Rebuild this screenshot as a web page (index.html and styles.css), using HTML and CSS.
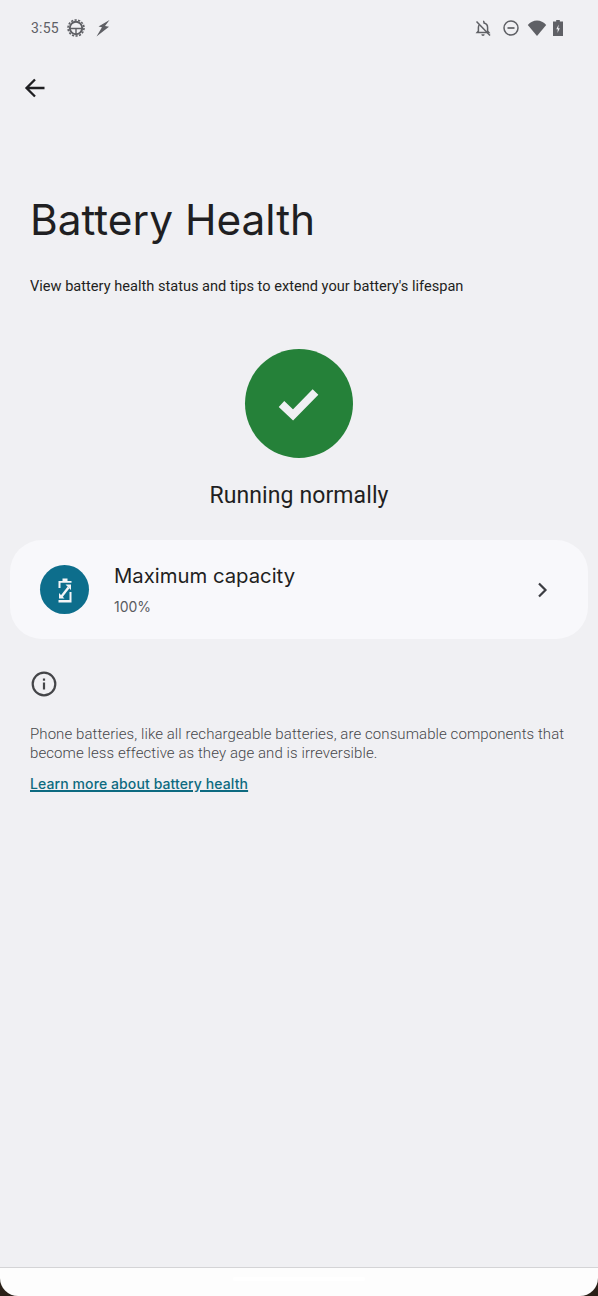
FILE: index.html
```
<!DOCTYPE html>
<html lang="en">
<head>
<meta charset="utf-8">
<title>Battery Health</title>
<link rel="stylesheet" href="styles.css">
</head>
<body>
<div class="screen">
  <header class="status">
    <div class="status-group">
      <span class="clock">3:55</span>
      <svg width="20" height="20" viewBox="0 0 20 20"><circle cx="10" cy="10" r="6.200" fill="none" stroke="#5f6065" stroke-width="2"/><circle cx="10" cy="10" r="8" fill="none" stroke="#5f6065" stroke-width="1.600" stroke-dasharray="2.200 1.400"/><path d="M4 10.500h12M10 10.500v6" stroke="#5f6065" stroke-width="1.400"/></svg>
      <svg class="bolt" width="16" height="20" viewBox="0 0 16 20"><path d="M14.500 2 3.500 8.500l3.500.7L1.500 18.500l12.500-9.700-4-.8z" fill="#5f6065"/></svg>
    </div>
    <div class="status-group right">
      <svg class="bell" width="18" height="18" viewBox="0 0 18 18"><path d="M9 2.200a1 1 0 0 1 1 1v.7c2.200.5 3.600 2.400 3.600 4.600v3.600l1.200 1.400H3.200l1.200-1.400V8.500c0-1 .3-1.900.8-2.600" fill="none" stroke="#5f6065" stroke-width="1.500"/><path d="M7.300 15.200h3.400a1.700 1.700 0 0 1-3.400 0z" fill="#5f6065"/><path d="M2.500 2.500l13.500 14" stroke="#5f6065" stroke-width="1.500"/></svg>
      <svg width="18" height="18" viewBox="0 0 18 18"><circle cx="9" cy="9" r="7" fill="none" stroke="#5f6065" stroke-width="1.500"/><path d="M5.500 9h7" stroke="#5f6065" stroke-width="1.700"/></svg>
      <svg width="20" height="18" viewBox="0 0 20 18"><path d="M.8 6C3.300 3.200 6.500 1.500 10 1.500s6.700 1.700 9.200 4.500L10 17z" fill="#5f6065"/></svg>
      <svg class="battery" width="12" height="18" viewBox="0 0 12 18"><path d="M4.200 1h3.600v1.500H11V17H1V2.500h3.200z" fill="#5f6065"/><path d="M6.700 5.500 4.300 10.200h1.500l-.3 3.800L7.800 9.200H6.200z" fill="#f0f0f3"/></svg>
    </div>
  </header>

  <main class="main">
    <nav class="toolbar">
      <svg width="24" height="24" viewBox="0 0 24 24"><path d="M21.500 12H4.500M12 3.500 3.500 12l8.500 8.500" fill="none" stroke="#1f1f22" stroke-width="2.300"/></svg>
    </nav>

    <h1 class="title">Battery Health</h1>
    <p class="subtitle">View battery health status and tips to extend your battery's lifespan</p>

    <section class="health">
      <div class="health-circle">
        <svg width="44" height="36" viewBox="0 0 44 36"><path d="M4.500 18 16 29 38.500 6" fill="none" stroke="#f0f0f3" stroke-width="8"/></svg>
      </div>
      <div class="health-label">Running normally</div>
    </section>

    <section class="card">
      <div class="card-icon">
        <svg width="20" height="28" viewBox="0 0 20 28"><path d="M3.500 12V5h4V2.500h5V5h4v1.800H5.500V12zM14.500 16h2v10.500h-13V24h11z" fill="#f4f5f7"/><path d="M6.500 20.500 13.500 11.500" fill="none" stroke="#f4f5f7" stroke-width="2.400"/><path d="M10.500 8.500h5.500V14zM4 22.500V17l5.500 5.500z" fill="#f4f5f7"/></svg>
      </div>
      <div class="card-text">
        <div class="card-title">Maximum capacity</div>
        <div class="card-value">100%</div>
      </div>
      <svg class="chevron" width="14" height="18" viewBox="0 0 14 18"><path d="M3 2.500 9.500 9 3 15.500" fill="none" stroke="#3c3d42" stroke-width="2.200"/></svg>
    </section>

    <section class="info">
      <svg class="info-icon" width="28" height="28" viewBox="0 0 28 28"><circle cx="14" cy="14" r="11.300" fill="none" stroke="#444548" stroke-width="2.200"/><rect x="12.900" y="12.500" width="2.200" height="7" fill="#444548"/><rect x="12.900" y="8.500" width="2.200" height="2.200" fill="#444548"/></svg>
      <p class="info-text">Phone batteries, like all rechargeable batteries, are consumable components that become less effective as they age and is irreversible.</p>
      <a class="info-link" href="#">Learn more about battery health</a>
    </section>
  </main>

  <footer class="navbar">
    <div class="navbar-inner"><span class="handle"></span></div>
  </footer>
</div>
</body>
</html>
```

FILE: styles.css
```
* { box-sizing: border-box; }
html, body { margin: 0; padding: 0; }
body { width: 598px; height: 1296px; overflow: hidden; background: #f0f0f3; font-family: Roboto, "Liberation Sans", sans-serif; }
.screen { width: 598px; height: 1296px; display: flex; flex-direction: column; }

.status { height: 55px; flex: none; display: flex; justify-content: space-between; align-items: center; padding: 0 34px 0 31px; color: #5f6065; }
.status-group { display: flex; align-items: center; gap: 7px; }
.status-group.right { gap: 7px; }
.clock { font-size: 14px; letter-spacing: 0.2px; }
.bolt { margin-left: 2px; }
.bell { margin-right: 3px; }
.battery { margin-left: -2px; }

.main { flex: 1; min-height: 0; display: flex; flex-direction: column; }
.toolbar { height: 65px; flex: none; padding: 21px 0 0 23px; }
.title { margin: 70px 0 0; padding-left: 30px; font-family: Inter, Roboto, sans-serif; font-weight: 400; font-size: 42.4px; line-height: 60px; color: #1f1f22; }
.subtitle { margin: 26px 0 0; padding-left: 30px; font-size: 14.6px; line-height: 20px; color: #1f1f22; }

.health { margin-top: 53px; display: flex; flex-direction: column; align-items: center; }
.health-circle { width: 108px; height: 109px; border-radius: 50%; background: #258139; display: flex; align-items: center; justify-content: center; }
.health-label { margin-top: 24px; font-size: 23px; line-height: 28px; color: #1f1f22; font-weight: 400; letter-spacing: 0.1px; }

.card { margin: 30px 10px 0; height: 99px; border-radius: 32px; background: #f8f8fb; display: flex; align-items: center; padding: 0 38px 0 30px; }
.card-icon { width: 49px; height: 49px; border-radius: 50%; background: #0d6e8c; display: flex; align-items: center; justify-content: center; flex: none; }
.card-text { flex: 1; margin-left: 25px; padding-top: 2px; }
.card-title { font-family: Inter, Roboto, sans-serif; font-size: 20.3px; line-height: 28px; color: #1f1f22; margin-top: -2px; }
.card-value { margin-top: 7px; font-family: Inter, Roboto, sans-serif; font-size: 14px; line-height: 20px; color: #5a5b60; }

.info { padding: 31px 30px 0; }
.info-icon { display: block; margin-left: 0; }
.info-text { margin: 27px 0 0; font-size: 15px; line-height: 19px; color: #46474b; font-weight: 300; letter-spacing: 0.08px; }
.info-link { display: inline-block; margin-top: 11px; font-family: Inter, Roboto, sans-serif; font-size: 14px; font-weight: 500; line-height: 20px; color: #0d6a80; text-decoration: underline; text-decoration-thickness: 1.5px; letter-spacing: 0.1px; }

.navbar { height: 29px; flex: none; background: #2a2018; border-top: 1px solid #d4d4d6; }
.navbar-inner { height: 100%; background: #fdfdfd; border-radius: 0 0 18px 18px; display: flex; justify-content: center; padding-top: 9px; }
.handle { width: 132px; height: 4px; border-radius: 2px; background: #fff; }
```
